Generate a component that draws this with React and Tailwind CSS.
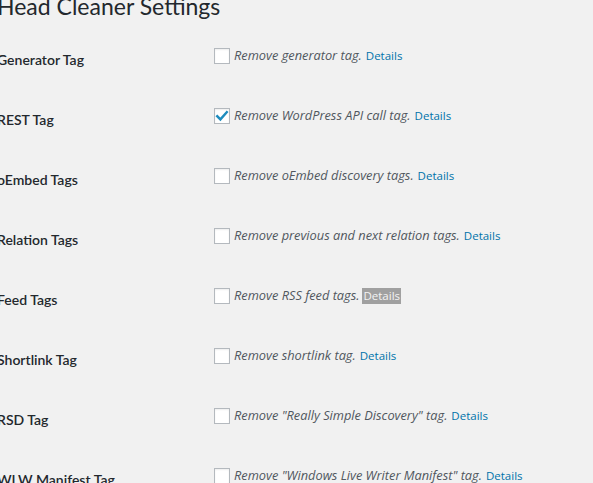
const rows = [
  { label: "Generator Tag", text: "Remove generator tag." },
  { label: "REST Tag", text: "Remove WordPress API call tag.", checked: true },
  { label: "oEmbed Tags", text: "Remove oEmbed discovery tags." },
  { label: "Relation Tags", text: "Remove previous and next relation tags." },
  { label: "Feed Tags", text: "Remove RSS feed tags.", selected: true },
  { label: "Shortlink Tag", text: "Remove shortlink tag." },
  { label: "RSD Tag", text: 'Remove "Really Simple Discovery" tag.' },
  { label: "WLW Manifest Tag", text: 'Remove "Windows Live Writer Manifest" tag.' },
];

function Checkbox({ checked }) {
  return (
    <span className="w-4 h-4 shrink-0 mr-1 bg-white border border-[#b4b9be] shadow-[inset_0_1px_2px_rgba(0,0,0,0.07)] flex items-center justify-center">
      {checked && (
        <svg width="14" height="14" viewBox="0 0 14 14">
          <path d="M2.2 7.2 L5.4 10.4 L11.8 3.2" fill="none" stroke="#1e8cbe" strokeWidth="2.4" strokeLinecap="square" />
        </svg>
      )}
    </span>
  );
}

export default function App() {
  return (
    <div className="w-[593px] h-[483px] overflow-hidden bg-[#f1f1f1] text-[#23282d] font-['Open_Sans',sans-serif]">
      <div className="-ml-[3px]">
        <h1 className="-mt-[9px] text-[23px] leading-[30px] font-normal font-['Lato',sans-serif]">Head Cleaner Settings</h1>
        <div className="mt-[14px]">
          {rows.map((r) => (
            <div key={r.label} className="flex h-[60px]">
              <div className="w-[217px] shrink-0 pt-[16px] text-[14px] leading-[18px] font-semibold font-['Lato',sans-serif]">{r.label}</div>
              <div className="pt-[12px] flex items-start">
                <div className="flex items-center">
                  <Checkbox checked={r.checked} />
                  <span className="text-[12.8px] leading-[17px] italic text-[#50575e]">{r.text}</span>
                  <span
                    className={
                      r.selected
                        ? "ml-[3px] px-[1px] text-[11.5px] leading-[16px] bg-[#a0a0a0] text-[#f4f4f4]"
                        : "ml-[4px] text-[11.5px] leading-[16px] text-[#0073aa]"
                    }
                  >
                    Details
                  </span>
                </div>
              </div>
            </div>
          ))}
        </div>
      </div>
    </div>
  );
}
